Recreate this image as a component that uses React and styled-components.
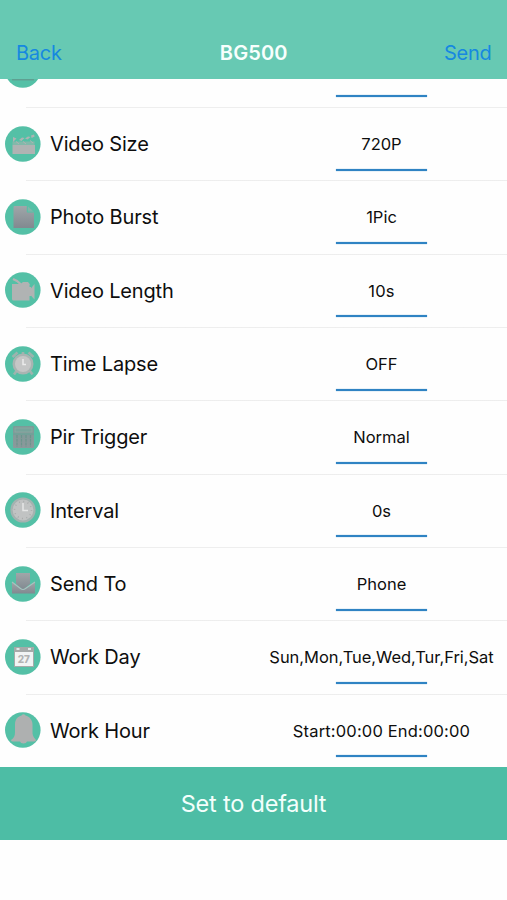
import React from 'react';
import styled, { createGlobalStyle } from 'styled-components';

const GlobalStyle = createGlobalStyle`
  * {
    box-sizing: border-box;
  }

  body {
    margin: 0;
    background: #fefefe;
    font-family: 'Inter', sans-serif;
    color: #0e0e0e;
  }
`;

const Screen = styled.main`
  width: 507px;
  height: 900px;
  display: flex;
  flex-direction: column;
  overflow: hidden;
`;

const Header = styled.header`
  flex: none;
  height: 79.3px;
  display: grid;
  grid-template-columns: 1fr auto 1fr;
  align-items: end;
  padding: 0 15.5px 13.3px 16px;
  background: #67c9b3;
`;

const NavButton = styled.button`
  justify-self: ${(props) => (props.$end ? 'end' : 'start')};
  border: 0;
  padding: 0;
  background: none;
  font-family: inherit;
  font-size: 20px;
  line-height: 26px;
  letter-spacing: -0.25px;
  color: #1688e0;
`;

const Title = styled.h1`
  margin: 0;
  font-size: 20px;
  font-weight: 600;
  line-height: 26px;
  letter-spacing: 0.15px;
  color: #f8fffd;
`;

const List = styled.ul`
  flex: none;
  height: 687.7px;
  margin: 0;
  padding: 0;
  display: flex;
  flex-direction: column;
  justify-content: flex-end;
  overflow: hidden;
  list-style: none;
`;

const Row = styled.li`
  flex: none;
  height: 73.33px;
  display: grid;
  grid-template-columns: 50px 206px 251px;
  background: linear-gradient(#ececec, #ececec) 26px 0 / 481px 1.3px no-repeat;
  background-position-y: -0.4px;
`;

const Icon = styled.svg`
  width: 36px;
  height: 36px;
  margin: 18.5px 0 0 5px;
`;

const Label = styled.span`
  margin-top: 24px;
  font-size: 20px;
  line-height: 26px;
  letter-spacing: -0.16px;
  white-space: nowrap;
`;

const Value = styled.div`
  display: flex;
  flex-direction: column;
  align-items: center;
  padding-top: 25.9px;
  font-size: 16.5px;
  line-height: 22px;
  letter-spacing: ${(props) => props.$spacing || '0'};
  white-space: nowrap;

  &::after {
    content: '';
    width: 91px;
    height: 2px;
    margin-top: auto;
    margin-bottom: 9.8px;
    background: #2f83c3;
    box-shadow: 0 0 1px #2f83c3;
  }
`;

const DefaultButton = styled.button`
  flex: none;
  height: 72.7px;
  border: 0;
  padding: 0;
  background: #4dbda5;
  font-family: inherit;
  font-size: 23.5px;
  letter-spacing: -0.2px;
  color: #f4fffc;
`;

const icons = {
  photo: <rect x="7" y="10" width="22" height="18.5" fill="#5f9f91" />,
  clapper: (
    <g fill="#b0b3b3">
      <path d="M7.5 19H30v9H7.5z" />
      <path d="M7.5 15.5h22V19h-22z" fill="#82b9aa" />
      <path d="M8 11l3.5 1.5L8 16zM14 14l3-2.500 2.500.5-3 3zM20 12.500l3-2 2.500.5-3 2.500zM26 9.500l3-1 .6 2-3 1.500z" />
      <path
        d="M11 15.500l3 2.500M18 15.500l3 2.500M25 14.500l3 2.500"
        stroke="#b0b3b3"
      />
    </g>
  ),
  page: (
    <g>
      <path d="M8.500 8q0-1 1-1H22v6h7v16H8.500z" fill="url(#steel)" />
      <path d="M22.500 7l6.500 6h-6.500z" fill="#7fb5a9" />
      <path d="M22.300 6.500v6.600H29.500" fill="none" stroke="#58bfa6" />
    </g>
  ),
  camera: (
    <g fill="#b0b3b3">
      <path d="M7 12h17.5v16.5h-16q-1.500 0-1.500-1.500z" />
      <path d="M25.5 17l4-5v15.500l-4-4.500z" />
      <path
        d="M8 7l4 2 4 3.500"
        fill="none"
        stroke="#b0b3b3"
        strokeWidth="2.2"
      />
      <path d="M15 12.500l3-2.500h5l2 2.500z" />
      <path d="M25 15v9" stroke="#b0b3b3" strokeWidth="2" />
    </g>
  ),
  alarm: (
    <g>
      <path
        d="M7.500 11l5-4.500M23.500 6.500l5 4.500M11.500 25l-2.500 3.500M25 25l2.500 3.500M18 6v3"
        stroke="#9db3ae"
        strokeWidth="2.6"
      />
      <circle cx="18" cy="18" r="10.5" fill="#a9b4b2" />
      <circle cx="18" cy="18" r="8" fill="#c5c6c6" />
      <path d="M18 13v5.500h3" fill="none" stroke="#ececec" strokeWidth="1.5" />
    </g>
  ),
  calculator: (
    <g>
      <rect x="8" y="7" width="21" height="22" rx="1" fill="url(#slate)" />
      <rect
        x="10"
        y="9"
        width="17"
        height="4"
        fill="#78a39b"
        stroke="#91a8a4"
        strokeWidth=".7"
      />
      <path
        d="M12 16v12M16.500 16v12M21 16v12M25.500 16v12"
        stroke="#6b958c"
        strokeWidth="1.2"
        strokeDasharray="3 .8"
      />
      <path d="M8 15h21" stroke="#67a497" />
    </g>
  ),
  clock: (
    <g>
      <circle
        cx="18"
        cy="18"
        r="11.5"
        fill="#c1c3c3"
        stroke="#a4b2b0"
        strokeWidth="2.2"
      />
      <circle
        cx="18"
        cy="18"
        r="8.5"
        fill="none"
        stroke="#a9acac"
        strokeWidth="1.6"
        strokeDasharray="1 3.45"
      />
      <path d="M18 11v7.500h5" fill="none" stroke="#e6e7e7" strokeWidth="1.5" />
    </g>
  ),
  mail: (
    <g>
      <path d="M11 7h14v11l-7 6-7-6z" fill="url(#steel)" />
      <path d="M7 16l11 8 12-8v11.500H7z" fill="url(#steel)" />
      <path
        d="M7 16l8.500 6.500q2.500 2 5 0L30 16"
        fill="none"
        stroke="#a7c3bf"
        strokeWidth="1.1"
      />
    </g>
  ),
  calendar: (
    <g>
      <path d="M9 8h20v20H9z" fill="#a5aaa9" />
      <path d="M10 13h18v14H10z" fill="#f1f4f4" />
      <path d="M11.500 10h3M23 10h3" stroke="#e1e8e7" strokeWidth="1.8" />
      <text
        x="18.8"
        y="23.6"
        textAnchor="middle"
        fontFamily="Inter, sans-serif"
        fontSize="10"
        fontWeight="800"
        fill="#b1b3b3"
      >
        27
      </text>
    </g>
  ),
  bell: (
    <path
      d="M16.500 3.500q2-2.500 4 0c4 1 7 4.500 7 9V20c0 4 1.500 5.500 3.500 8q0 1.500-2 1.500h-7q-.5 2-3.500 2t-3.500-2H8q-2 0-2-1.500C9 26 10 24 10 20v-7.500c0-5 2.500-8 6.500-9z"
      fill="#aeb0b0"
    />
  ),
};

const settings = [
  { label: '', value: '', icon: 'photo' },
  { label: 'Video Size', value: '720P', icon: 'clapper' },
  { label: 'Photo Burst', value: '1Pic', icon: 'page' },
  { label: 'Video Length', value: '10s', icon: 'camera', spacing: '0.15px' },
  { label: 'Time Lapse', value: 'OFF', icon: 'alarm' },
  { label: 'Pir Trigger', value: 'Normal', icon: 'calculator' },
  { label: 'Interval', value: '0s', icon: 'clock' },
  { label: 'Send To', value: 'Phone', icon: 'mail' },
  {
    label: 'Work Day',
    value: 'Sun,Mon,Tue,Wed,Tur,Fri,Sat',
    icon: 'calendar',
    spacing: '-0.04px',
  },
  {
    label: 'Work Hour',
    value: 'Start:00:00 End:00:00',
    icon: 'bell',
    spacing: '0.16px',
  },
];

export default function App() {
  return (
    <Screen>
      <GlobalStyle />
      <Header>
        <NavButton>Back</NavButton>
        <Title>BG500</Title>
        <NavButton $end>Send</NavButton>
      </Header>
      <List>
        {settings.map((item) => (
          <Row key={item.icon}>
            <Icon viewBox="0 0 36 36">
              <defs>
                <linearGradient id="steel" x1="0" y1="0" x2="0" y2="1">
                  <stop offset="0" stopColor="#a0a6a9" />
                  <stop offset="1" stopColor="#818990" />
                </linearGradient>
                <linearGradient id="slate" x1="0" y1="0" x2="0" y2="1">
                  <stop offset="0" stopColor="#7b9c98" />
                  <stop offset="1" stopColor="#8c989b" />
                </linearGradient>
              </defs>
              <circle cx="17.8" cy="18" r="17.8" fill="#54c0a6" />
              {icons[item.icon]}
            </Icon>
            <Label>{item.label}</Label>
            <Value $spacing={item.spacing}>{item.value}</Value>
          </Row>
        ))}
      </List>
      <DefaultButton>Set to default</DefaultButton>
    </Screen>
  );
}
